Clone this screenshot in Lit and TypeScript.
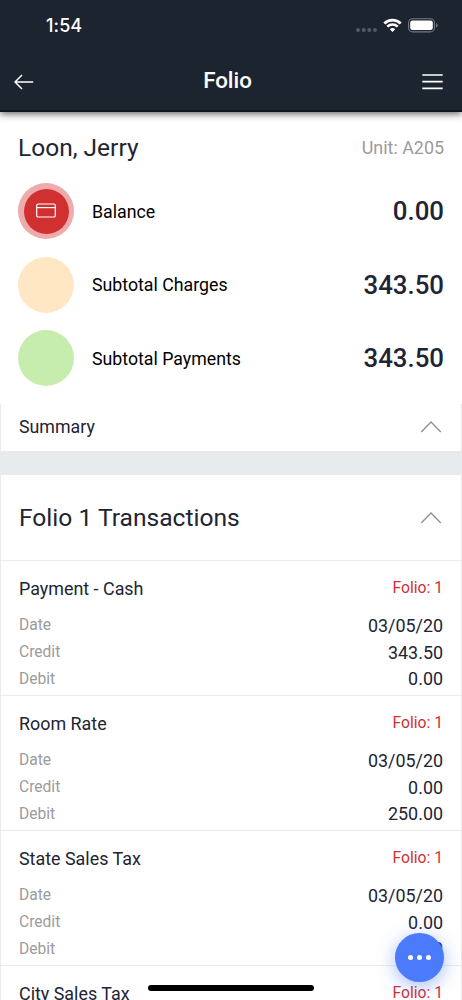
import { LitElement, html, css, svg } from "lit";
import { customElement } from "lit/decorators.js";

interface Transaction {
  title: string;
  lines: [string, string][];
}

const lines = (date: string, credit: string, debit: string): [string, string][] => [
  ["Date", date],
  ["Credit", credit],
  ["Debit", debit],
];

const transactions: Transaction[] = [
  { title: "Payment - Cash", lines: lines("03/05/20", "343.50", "0.00") },
  { title: "Room Rate", lines: lines("03/05/20", "0.00", "250.00") },
  { title: "State Sales Tax", lines: lines("03/05/20", "0.00", "15.00") },
  { title: "City Sales Tax", lines: [] },
];

const totals = [
  { label: "Balance", value: "0.00", kind: "balance" },
  { label: "Subtotal Charges", value: "343.50", kind: "charges" },
  { label: "Subtotal Payments", value: "343.50", kind: "payments" },
];

const chevron = html`<svg class="chevron" width="22" height="13" viewBox="0 0 22 13">
  <path d="M1.2 12 L11 2 L20.8 12" fill="none" stroke="#8f8f8f" stroke-width="1.3" />
</svg>`;

@customElement("app-root")
export class AppRoot extends LitElement {
  static styles = css`
    :host {
      display: block;
      width: 462px;
      height: 1000px;
      overflow: hidden;
      position: relative;
      background: #fff;
      color: #222433;
      font-family: Roboto, "Liberation Sans", sans-serif;
      white-space: nowrap;
    }
    * { box-sizing: border-box; }
    svg { display: block; flex: none; }
    .top {
      height: 112px;
      background: #1c242f;
      border-bottom: 2px solid #12171e;
      box-shadow: 0 2px 7px rgba(0, 0, 0, 0.6);
      color: #fff;
      position: relative;
    }
    .status {
      height: 52px;
      padding: 0 23px 0 46px;
      display: flex;
      align-items: center;
      justify-content: space-between;
    }
    .clock {
      font: 500 18px/22px Inter, sans-serif;
      letter-spacing: 0.1px;
    }
    .nav {
      height: 60px;
      padding: 0 19px 0 14px;
      display: grid;
      grid-template-columns: 60px 1fr 60px;
      align-items: center;
    }
    .nav-title {
      font-size: 22.3px;
      line-height: 26px;
      font-weight: 500;
      text-align: center;
      padding: 0 2px 5px 0;
    }
    .menu { justify-self: end; }
    .person {
      height: 71px;
      padding: 0 18px 1px;
      display: flex;
      align-items: center;
      justify-content: space-between;
    }
    .name { font-size: 24.5px; }
    .unit { font-size: 17.9px; color: #9b9b9b; }
    .totals {
      height: 221px;
      padding: 0 18px;
      display: grid;
      grid-auto-rows: 56px;
      row-gap: 17.7px;
    }
    .total {
      display: grid;
      grid-template-columns: 56px 1fr auto;
      column-gap: 18px;
      align-items: center;
    }
    .dot {
      width: 56px;
      height: 56px;
      border-radius: 50%;
      display: flex;
      align-items: center;
      justify-content: center;
    }
    .balance { background: #edabab; }
    .disc {
      width: 45px;
      height: 45px;
      border-radius: 50%;
      background: #d03030;
      display: flex;
      align-items: center;
      justify-content: center;
    }
    .charges { background: #ffe7c4; }
    .payments { background: #c7edae; }
    .total-label { font-size: 17.75px; color: #000; padding-top: 1px; }
    .total-value { font-size: 25.8px; font-weight: 500; }
    .summary {
      height: 47px;
      border: solid #ebebeb;
      border-width: 0 1.5px;
      padding: 0 19px 2px 18px;
      display: flex;
      align-items: center;
      justify-content: space-between;
      font-size: 17.8px;
    }
    .summary .chevron { margin-bottom: 1px; }
    .band { height: 24px; background: #e7ebee; }
    .card {
      border: solid #ebebeb;
      border-width: 0 1.5px;
    }
    .card-head {
      height: 85px;
      padding: 0 19px 1px 18px;
      display: flex;
      align-items: center;
      justify-content: space-between;
    }
    .card-title { font-size: 24.6px; }
    .item {
      height: 135px;
      border-top: 1.5px solid #ebebeb;
      padding: 14px 18px 0;
    }
    .item-head {
      height: 26px;
      display: flex;
      align-items: center;
      justify-content: space-between;
      margin-bottom: 11px;
    }
    .item-title { font-size: 17.9px; }
    .item-folio { font-size: 15.7px; color: #d03030; padding-bottom: 1px; }
    .line {
      height: 26.8px;
      display: flex;
      align-items: center;
      justify-content: space-between;
    }
    .key { font-size: 15.6px; color: #9b9b9b; }
    .val { font-size: 17.9px; }
    .fab {
      position: absolute;
      left: 395px;
      top: 933px;
      width: 49px;
      height: 49px;
      border-radius: 50%;
      background: #4b7bfb;
      box-shadow: 0 4px 18px rgba(75, 123, 251, 0.5);
      display: flex;
      align-items: center;
      justify-content: center;
      gap: 4px;
    }
    .fab-dot {
      width: 5px;
      height: 5px;
      border-radius: 50%;
      background: #fff;
    }
    .home {
      position: absolute;
      left: 148px;
      top: 985px;
      width: 166px;
      height: 6px;
      border-radius: 3px;
      background: #000;
    }
  `;

  private statusIcons() {
    return html`<svg width="84" height="16" viewBox="355 18 84 16">
      ${[358, 363.7, 369.3, 375].map((x) => svg`<circle cx=${x} cy="30" r="2" fill="#555a64" />`)}
      <g fill="none" stroke="#fff">
        <path d="M384.3 23.5 A11.7 11.7 0 0 1 400.7 23.5" stroke-width="2.7" />
        <path d="M387.3 26.7 A7.5 7.5 0 0 1 397.7 26.7" stroke-width="2.5" />
      </g>
      <path d="M389.8 29.2 A4 4 0 0 1 395.2 29.2 L392.5 32 Z" fill="#fff" />
      <rect x="408.6" y="18.7" width="25.8" height="13.2" rx="4" fill="none" stroke="#747a83" stroke-width="1.1" />
      <rect x="410.2" y="20.6" width="22.6" height="9.4" rx="2.2" fill="#fff" />
      <path d="M436 23 Q437.6 23.7 437.6 25.3 Q437.6 26.9 436 27.6 Z" fill="#747a83" />
    </svg>`;
  }

  render() {
    return html`
      <header class="top">
        <div class="status"><span class="clock">1:54</span>${this.statusIcons()}</div>
        <div class="nav">
          <svg width="20" height="16" viewBox="0 0 20 16">
            <path d="M19.2 8 H1 M8 1 L1 8 L8 15" fill="none" stroke="#fff" stroke-width="1.5" />
          </svg>
          <span class="nav-title">Folio</span>
          <svg class="menu" width="21" height="16" viewBox="0 0 21 16">
            <path d="M0.3 1 H20.7 M0.3 7.7 H20.7 M0.3 14.4 H20.7" stroke="#fff" stroke-width="1.7" />
          </svg>
        </div>
      </header>
      <section class="person">
        <span class="name">Loon, Jerry</span><span class="unit">Unit: A205</span>
      </section>
      <section class="totals">
        ${totals.map(
          (t) => html`<div class="total">
            <div class="dot ${t.kind}">
              ${t.kind === "balance"
                ? html`<div class="disc"><svg width="20" height="16" viewBox="0 0 20 16">
                    <g fill="none" stroke="#fff" stroke-width="1.2">
                      <rect x="0.7" y="1" width="18.6" height="13" rx="1.6" />
                      <path d="M0.7 4.6 H19.3" />
                    </g>
                  </svg></div>`
                : ""}
            </div>
            <span class="total-label">${t.label}</span><span class="total-value">${t.value}</span>
          </div>`
        )}
      </section>
      <section class="summary"><span>Summary</span>${chevron}</section>
      <div class="band"></div>
      <section class="card">
        <div class="card-head"><span class="card-title">Folio 1 Transactions</span>${chevron}</div>
        ${transactions.map(
          (t) => html`<article class="item">
            <div class="item-head">
              <span class="item-title">${t.title}</span><span class="item-folio">Folio: 1</span>
            </div>
            ${t.lines.map(
              ([key, value]) => html`<div class="line"><span class="key">${key}</span><span class="val">${value}</span></div>`
            )}
          </article>`
        )}
      </section>
      <div class="fab"><i class="fab-dot"></i><i class="fab-dot"></i><i class="fab-dot"></i></div>
      <div class="home"></div>
    `;
  }
}
